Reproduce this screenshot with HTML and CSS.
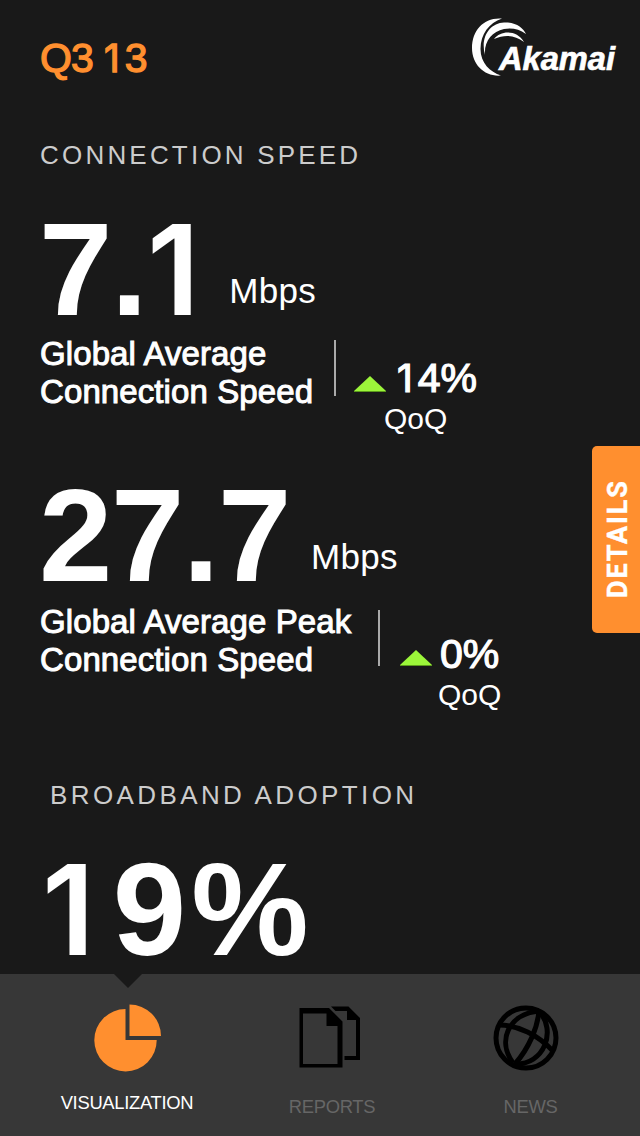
FILE: index.html
```html
<!DOCTYPE html>
<html lang="en">
<head>
<meta charset="utf-8">
<title>State of the Internet</title>
<link rel="stylesheet" href="styles.css">
</head>
<body>
<div class="app">
  <header class="header">
    <h1 class="quarter">Q3 <span class="one">1</span>3</h1>
    <svg class="logo" width="150" height="62" viewBox="0 0 150 62" role="img" aria-label="Akamai">
      <g fill="#fff">
        <path d="M32 0.5C14 -1 2 12 2 30C2 47 15 59 31 57.500C20 54 10.500 45 10.500 31C10.500 16 19 5 32 0.5Z"/>
        <path d="M15 37C10 19 20 5 34 4.500C46 4 53 10 56 16C49 11 42 9.500 34 11C22 13.500 14 23 15 37Z"/>
        <path d="M24 21C31 12 47 12 54 24C45 17 35 16 24 21Z"/>
      </g>
      <text class="logo-text" x="29" y="51.500" textLength="116" lengthAdjust="spacingAndGlyphs">Akamai</text>
    </svg>
  </header>

  <main class="content">
    <h2 class="section-title">CONNECTION SPEED</h2>
    <section class="stat">
      <div class="stat-value"><span class="number">7.<span class="one">1</span></span><span class="unit">Mbps</span></div>
      <div class="stat-detail">
        <p class="label">Global Average<br>Connection Speed</p>
        <div class="divider"></div>
        <div class="change">
          <div class="change-row">
            <svg class="up" width="32" height="16" viewBox="0 0 32 16"><path fill="#9cf63a" d="M16 0L32 15V16H0V15Z"/><path fill="#5c9b1c" d="M0 15H32V16H0Z"/></svg>
            <span class="percent"><span class="one">1</span>4%</span>
          </div>
          <div class="period">QoQ</div>
        </div>
      </div>
    </section>
    <section class="stat stat-peak">
      <div class="stat-value"><span class="number">27.7</span><span class="unit">Mbps</span></div>
      <div class="stat-detail">
        <p class="label">Global Average Peak<br>Connection Speed</p>
        <div class="divider"></div>
        <div class="change">
          <div class="change-row">
            <svg class="up" width="32" height="16" viewBox="0 0 32 16"><path fill="#9cf63a" d="M16 0L32 15V16H0V15Z"/><path fill="#5c9b1c" d="M0 15H32V16H0Z"/></svg>
            <span class="percent">0%</span>
          </div>
          <div class="period">QoQ</div>
        </div>
      </div>
    </section>
    <h2 class="section-title section-broadband">BROADBAND ADOPTION</h2>
    <div class="stat-value"><span class="number number-share"><span class="one">1</span>9%</span></div>
  </main>

  <div class="details">DETAILS</div>

  <nav class="tabs">
    <div class="tab tab-visualization">
      <svg width="68" height="68" viewBox="0 0 68 68"><g fill="#ff8f2f"><path d="M31.500 5A31.200 31.200 0 1 0 62.700 36H31.500Z"/><path d="M35.500 0.500A31.500 31.500 0 0 1 67 32H35.500Z"/></g></svg>
      <span>VISUALIZATION</span>
    </div>
    <div class="tab tab-reports">
      <svg width="62" height="62" viewBox="0 0 62 62"><path fill-rule="evenodd" d="M0.500 2H30L43.500 15.500V61.500H0.500ZM4 7.500V58H38.500V20H27.500V7.500Z"/><path d="M32 0.500H49.500L61 12V54H45.500V50H57V14H48V5H36.500Z"/></svg>
      <span>REPORTS</span>
    </div>
    <div class="tab tab-news">
      <svg width="66" height="66" viewBox="0 0 66 66"><g fill="none" stroke="#000" stroke-width="5"><circle cx="33" cy="33" r="30"/><path d="M6 20C25 20 45 30 60 46"/><path d="M46 5C45 22 36 43 22 59"/><path d="M46 6C15 9 4 36 20 58"/><path d="M46 6C64 26 51 60 22 59"/></g></svg>
      <span>NEWS</span>
    </div>
  </nav>
</div>
</body>
</html>
```
FILE: styles.css
```css
* { box-sizing: border-box; }
body {
  margin: 0;
  background: #191919;
  color: #fff;
  font-family: "Liberation Sans", Arial, sans-serif;
}
h1, h2, p { margin: 0; font-weight: 400; }
.app {
  position: relative;
  width: 640px;
  height: 1136px;
  display: flex;
  flex-direction: column;
  overflow: hidden;
}
.header {
  display: flex;
  justify-content: space-between;
  height: 140px;
  padding: 18px 20px 0 40px;
}
.quarter {
  margin-top: 20px;
  font-size: 41px;
  line-height: 40px;
  letter-spacing: -1px;
  color: #ff8f2f;
  -webkit-text-stroke: 1.3px #ff8f2f;
}
.one { font-family: Inter, sans-serif; font-size: 0.945em; line-height: 0; }
.quarter .one { margin: 0 6px 0 1px; }
.logo-text {
  font: italic 700 33px "Liberation Sans", sans-serif;
  fill: #fff;
  stroke: #fff;
  stroke-width: 0.7px;
}
.content { height: 834px; padding-left: 40px; }
.section-title {
  height: 30px;
  font-size: 26px;
  line-height: 30px;
  letter-spacing: 3.2px;
  color: #ccc;
}
.stat { height: 226px; margin-top: 40px; }
.stat-value { display: flex; height: 120px; }
.number {
  margin-left: -1px;
  font-size: 132px;
  line-height: 120px;
  font-weight: 700;
  letter-spacing: -1.5px;
}
.number .one { font-weight: 600; margin-left: 1px; }
.number-share { letter-spacing: 5px; }
.number-share .one { margin: 0 13px 0 3px; }
.unit {
  margin: 61px 0 0 31px;
  font-size: 35px;
  line-height: 40px;
  letter-spacing: 0.3px;
}
.stat-detail { display: flex; margin-top: 5px; }
.label {
  width: 275px;
  font-size: 33px;
  line-height: 38px;
  letter-spacing: 0.1px;
  white-space: nowrap;
  -webkit-text-stroke: 1px #fff;
}
.divider {
  width: 2px;
  height: 56px;
  margin: 5px 18px 0 19px;
  background: #aaa;
}
.change { margin-top: 23px; }
.change-row { display: flex; height: 40px; }
.up { margin-top: 18px; }
.percent {
  margin-left: 9px;
  font-size: 41px;
  line-height: 40px;
  -webkit-text-stroke: 1.2px #fff;
}
.percent .one { margin: 0 5px 0 2px; }
.period {
  margin: 4px 0 0 30px;
  font-size: 30px;
  line-height: 34px;
}
.stat-peak .unit { margin-left: 21px; }
.stat-peak .stat-detail { margin-top: 7px; }
.stat-peak .label { width: 319px; }
.stat-peak .divider { margin: 7px 20px 0 19px; }
.stat-peak .change { margin-top: 31px; }
.stat-peak .up { margin-top: 16px; }
.stat-peak .percent { margin-left: 8px; }
.stat-peak .period { margin-left: 38px; }
.section-broadband { margin: 78px 0 40px 10px; letter-spacing: 3.4px; }
.details {
  position: absolute;
  top: 446px;
  right: 0;
  width: 48px;
  height: 187px;
  padding-right: 4px;
  padding-top: 1px;
  border-radius: 0 5px 5px 0;
  background: #ff8f2f;
  font: 700 27px/44px Roboto, sans-serif;
  letter-spacing: 1.9px;
  text-align: center;
  writing-mode: vertical-rl;
  transform: rotate(180deg);
  -webkit-text-stroke: 0.4px #fff;
}
.tabs {
  position: relative;
  display: flex;
  height: 162px;
  background: #373737;
}
.tabs::before {
  content: "";
  position: absolute;
  left: 114px;
  top: 0;
  border: 14px solid transparent;
  border-top-color: #191919;
  border-bottom: 0;
}
.tab {
  display: flex;
  flex: none;
  flex-direction: column;
  justify-content: space-between;
  align-items: center;
  height: 144px;
  padding-top: 32px;
  font-size: 18.4px;
  line-height: 22px;
  letter-spacing: -0.3px;
  color: #666;
}
.tab-visualization { width: 254px; height: 140px; padding-top: 30px; color: #fff; }
.tab-visualization svg { margin-left: 2px; }
.tab-reports { width: 156px; }
.tab-reports svg { margin-right: 4px; }
.tab-news { width: 230px; padding: 31px 0 0 11px; }
.tab-news svg { margin-right: 9px; }
```
